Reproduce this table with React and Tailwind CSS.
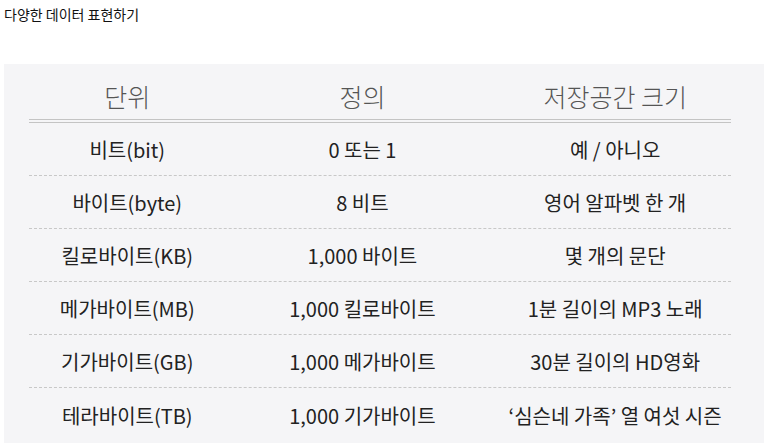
import React from 'react';

const rows = [
  ['비트(bit)', '0 또는 1', '예 / 아니오'],
  ['바이트(byte)', '8 비트', '영어 알파벳 한 개'],
  ['킬로바이트(KB)', '1,000 바이트', '몇 개의 문단'],
  ['메가바이트(MB)', '1,000 킬로바이트', '1분 길이의 MP3 노래'],
  ['기가바이트(GB)', '1,000 메가바이트', '30분 길이의 HD영화'],
  ['테라바이트(TB)', '1,000 기가바이트', '‘심슨네 가족’ 열 여섯 시즌'],
];

const cols = ['w-[28%]', 'w-[39%]', 'w-[33%]'];

const App = () => {
  return (
    <div className="min-h-screen bg-white font-['Noto_Sans_CJK_KR','Noto_Sans',sans-serif]">
      <div className="pl-[4px] pt-[4px] text-[14px] leading-[20px] text-[#111]">
        다양한 데이터 표현하기
      </div>
      <div className="mt-[40px] mx-[4px] bg-[#f5f5f7] pl-[25px] pr-[33px] pb-[20px]">
        <div className="flex h-[59px] items-center pt-[10px] border-b-[4px] border-double border-[#c4c4c4] text-[25px] font-light text-[#555]">
          {['단위', '정의', '저장공간 크기'].map((h, i) => (
            <div key={i} className={`${cols[i]} text-center`}>{h}</div>
          ))}
        </div>
        {rows.map((r, i) => (
          <div
            key={i}
            className={`flex h-[53px] items-center pt-[2px] text-[20px] text-[#222] ${i < rows.length - 1 ? 'border-b border-dashed border-[#c8c8c8]' : ''}`}
          >
            {r.map((c, j) => (
              <div key={j} className={`${cols[j]} text-center`}>{c}</div>
            ))}
          </div>
        ))}
      </div>
    </div>
  );
};

export default App;
